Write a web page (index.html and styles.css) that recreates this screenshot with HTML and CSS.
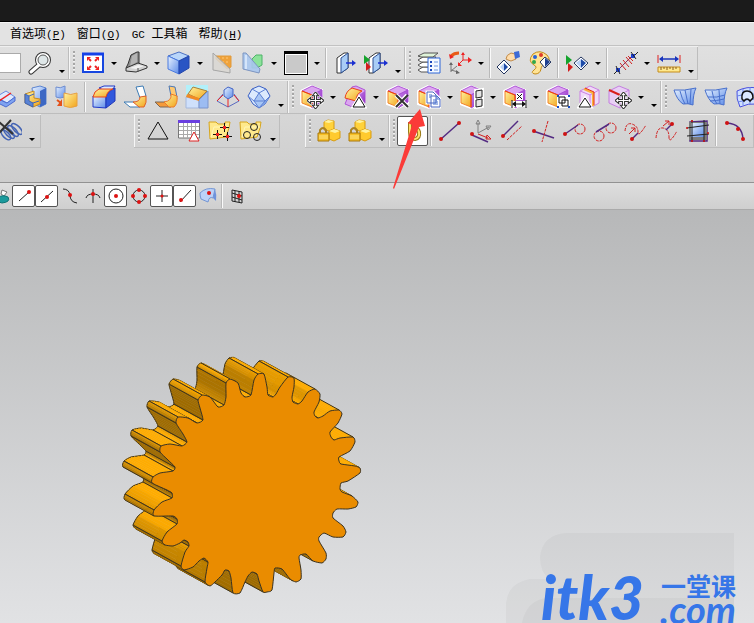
FILE: index.html
```html
<!DOCTYPE html>
<html lang="zh-CN">
  <head>
    <meta charset="utf-8">
    <meta name="viewport" content="width=device-width, initial-scale=1">
    <title>GC 工具箱</title>
    <link rel="stylesheet" href="styles.css">
  </head>
  <body>

  <!-- shared icon parts -->
  <svg class="defs" aria-hidden="true">
    <defs>
      <linearGradient id="blue" x1="0" y1="0" x2="1" y2="1"><stop offset="0" stop-color="#eaf4ff"/><stop offset="1" stop-color="#5b8ae8"/></linearGradient>
      <linearGradient id="gold" x1="0" y1="0" x2="1" y2="1"><stop offset="0" stop-color="#fff3a0"/><stop offset="1" stop-color="#f2a41c"/></linearGradient>
      <linearGradient id="side" x1="0" y1="0" x2="1" y2="1"><stop offset="0" stop-color="#c98be8"/><stop offset="1" stop-color="#8d24c4"/></linearGradient>
      <symbol id="cube" viewBox="0 0 24 24">
        <path d="M1 6 11 1l11 4v13l-10 5L1 19z" fill="#fff" stroke="#fff" stroke-width="2"/>
        <path d="M2 6 12 1l10 4-10 5z" fill="#dba6ef" stroke="#b055d8"/>
        <path d="M12 10 22 5v12l-10 6z" fill="url(#side)" stroke="#a84fd6"/>
        <path d="M2 6l10 4v12L2 18z" fill="url(#gold)" stroke="#f2822a"/>
        <path d="M2 6l10 4v12" fill="none" stroke="#ee3a10"/>
      </symbol>
      <symbol id="move" viewBox="0 0 16 16">
        <path d="M8 0l3 3.500H9V7h3.500V5L16 8l-3.500 3V9H9v3.500h2L8 16l-3-3.500h2V9H3.500v2L0 8l3.500-3v2H7V3.500H5z" fill="#fff" stroke="#fff" stroke-width="2"/>
        <path d="M8 1v14M1 8h14" stroke="#333" stroke-width="3"/>
        <path d="M8 0l3 3.500H5zM8 16l3-3.500H5zM0 8l3.500-3v6zM16 8l-3.500-3v6z" fill="#fff" stroke="#333"/>
        <path d="M8 3v10M3 8h10" stroke="#fff"/>
      </symbol>
      <symbol id="folder" viewBox="0 0 24 24">
        <path d="M1 3h7l2 2h7V3h5l-1 6-3 9-16 2z" fill="#ffe98c" stroke="#d6a51c"/>
        <path d="M3 18 6 8h15" fill="none" stroke="#fff7b8"/>
      </symbol>
      <symbol id="boxes" viewBox="0 0 24 24">
        <path d="M7 3l4-2 6 1v8l-5 2-5-1z" fill="#ffd23c" stroke="#d79b10"/>
        <path d="M7 3l5 1 5-2-6-1z" fill="#fff3a0"/>
        <path d="M12 12l5-2 6 2v7l-6 3-5-2z" fill="#ffca2e" stroke="#d79b10"/>
        <path d="M12 12l5-2 6 2-5 2z" fill="#fff3a0"/>
        <path d="M3 14v-3q3-4 6 0v3" fill="none" stroke="#a98224" stroke-width="2"/>
        <path d="M1 14h11v8H1z" fill="#f7c026" stroke="#a9780c"/>
        <path d="M2 17h9M2 19h9" stroke="#ffe98c"/>
      </symbol>
      <symbol id="door" viewBox="0 0 24 24">
        <path d="M4 7l7-5h4v15l-7 5H4z" fill="#fff" stroke="#333"/>
        <path d="M8 7l7-5v15l-7 5z" fill="#a9cdf6" stroke="#2c4f92"/>
        <path d="M13 12h7" stroke="#1a2fd0" stroke-width="1.500"/><path d="M19 9l4 3-4 3z" fill="#1a2fd0"/>
      </symbol>
    </defs>
  </svg>

  <header class="titlebar"></header>

  <nav class="menubar">
    <a href="#">首选项<span class="key">(<u>P</u>)</span></a>
    <a href="#">窗口<span class="key">(<u>O</u>)</span></a>
    <a href="#"><span class="key">GC </span>工具箱</a>
    <a href="#">帮助<span class="key">(<u>H</u>)</span></a>
  </nav>

  <div class="toolbars">

    <!-- view toolbar -->
    <div class="row">
      <div class="group">
        <input class="find" type="text" aria-label="查找命令">
        <button class="tool" aria-label="查找"><svg viewBox="0 0 24 24"><path d="M11 14 3 21" stroke="#333" stroke-width="5" stroke-linecap="round"/><circle cx="15" cy="9" r="6" fill="none" stroke="#333" stroke-width="4"/><path d="M11 14 3 21" stroke="#fff" stroke-width="3" stroke-linecap="round"/><circle cx="15" cy="9" r="6" fill="#dfe7e8" stroke="#fff" stroke-width="2"/><circle cx="15" cy="9" r="5" fill="none" stroke="#555"/></svg></button>
        <button class="more" aria-label="更多"></button>
      </div>
      <div class="group">
        <i class="grip"></i>
        <button class="tool" aria-label="适合窗口"><svg viewBox="0 0 24 24"><path d="M2 3h20v18H2z" fill="#fff" stroke="#1747e0" stroke-width="2"/><path d="M1 3h22" stroke="#1440e8" stroke-width="3"/><path d="M8 8l2 2M16 8l-2 2M8 17l2-2M16 17l-2-2" stroke="#e22" stroke-width="2"/><path d="M6 6h4L6 10zM18 6h-4l4 4zM6 19v-4l4 4zM18 19v-4l-4 4z" fill="#e22"/></svg></button>
        <button class="caret" aria-label="展开"></button>
        <button class="tool" aria-label="定向"><svg viewBox="0 0 24 24"><path d="M4 13 7 4l6-3h2v11L6 17H2z" fill="#8f8f8f" stroke="#333"/><path d="M8 5l5-3v9l-7 4z" fill="#b5b5b5"/><path d="M2 17l12-5 9 3v2l-11 4-10-1z" fill="#d2d2d2" stroke="#333"/><path d="M6 17l8-3 6 1-8 3z" fill="#f2f2f2"/><path d="M14 17v4" stroke="#555"/></svg></button>
        <button class="caret" aria-label="展开"></button>
        <button class="tool" aria-label="着色"><svg viewBox="0 0 24 24"><path d="M1 5 12 1l10 4-10 5z" fill="#b9d6fa" stroke="#4a70c4"/><path d="M1 5l11 5v13L1 18z" fill="url(#blue)" stroke="#4a7ae0"/><path d="M12 10l10-5v12l-10 6z" fill="#2a55c4" stroke="#2447ac"/></svg></button>
        <button class="caret" aria-label="展开"></button>
        <button class="tool" aria-label="剖切"><svg viewBox="0 0 24 24"><path d="M6 5h15v11l-4 2L6 8z" fill="#efa23a" stroke="#e09a3c"/><path d="M8 7h12M12 11h8" stroke="#ffc878" stroke-dasharray="2 2"/><path d="M3 2l17 16v4L3 19z" fill="#d9d7d2" fill-opacity=".85" stroke="#a5a5a5"/></svg></button>
        <button class="tool" aria-label="编辑截面"><svg viewBox="0 0 24 24"><path d="M11 8l4-4h6v10l-5 3h-5z" fill="#8ce29a" stroke="#4db368"/><path d="M2 2h3l14 16-1 4-16-4z" fill="#a9c6ee" fill-opacity=".9" stroke="#7d95c0"/><path d="M5 4v14" stroke="#d5e5fa" stroke-width="2"/></svg></button>
        <button class="caret" aria-label="展开"></button>
        <button class="tool" aria-label="背景色"><span class="swatch"></span></button>
        <button class="caret" aria-label="展开"></button>
        <i class="sep"></i>
        <button class="tool" aria-label="导出"><svg viewBox="0 0 24 24"><use href="#door"/></svg></button>
        <button class="tool" aria-label="运行导出"><svg viewBox="0 0 24 24"><use href="#door" x="1"/><path d="M0 4l6 5-6 4z" fill="#15a32c"/><path d="M2 11l5 5-5 4z" fill="#d31c1c"/></svg></button>
        <button class="more" aria-label="更多"></button>
      </div>
      <div class="group">
        <i class="grip"></i>
        <button class="tool" aria-label="图层设置"><svg viewBox="0 0 24 24"><g fill="#fff" stroke="#555"><path d="M1 19l5-3h13l-4 5H4z"/><path d="M1 14l5-3h13l-4 5H4z"/><path d="M1 9l5-3h13l-4 5H4z"/><path d="M1 5l6-3h14l-5 4H4z" fill="#dff3d8"/></g><path d="M11 7h12v15H11z" fill="#f4f9ff" stroke="#2f66d8"/><path d="M13 11h2M13 15h2M13 19h2" stroke="#1d49bb" stroke-width="2"/><path d="M17 11h4M17 15h4M17 19h4" stroke="#6b94df"/></svg></button>
        <button class="tool" aria-label="坐标系"><svg viewBox="0 0 24 24"><path d="M3 12v9M3 20l6-5M3 19l7 2" fill="none" stroke="#777"/><path d="M1 14l2-3 2 3zM8 19l4 3-4 1z" fill="#666"/><path d="M15 2v7h7M15 9l-4 4" fill="none" stroke="#e22"/><path d="M13 4l2-3 2 3zM20 6l4 3-4 3zM10 11v4h4z" fill="#e22"/><path d="M3 5q3-3 8-3" fill="none" stroke="#e85b18" stroke-width="3"/><path d="M1 3l1 5 4-2z" fill="#e22"/></svg></button>
        <button class="caret" aria-label="展开"></button>
        <i class="sep"></i>
        <button class="tool" aria-label="显示隐藏"><svg viewBox="0 0 24 24"><path d="M7 9l7 7-7 7-7-7z" fill="#fff" stroke="#22345e"/><path d="M7 12v8l4-4z" fill="#1d4ba8"/><path d="M7 12v8l-4-4z" fill="#bcd2f4"/><path d="M9 8q0-4 5-6l4 1 1 5-5 2-3-1z" fill="#ffdcaa" stroke="#c08a4a"/><path d="M17 1l5-1 1 6-5 2z" fill="#3c6ad6"/></svg></button>
        <button class="tool" aria-label="对象显示"><svg viewBox="0 0 24 24"><path d="M5 3q7-5 14 1 5 6-1 9-5 1-5 5-1 5-6 5-5-1-1-4 4-3 0-5-7-4-1-11z" fill="#ffe394" stroke="#c48b1a"/><circle cx="7" cy="6" r="2" fill="#2863d8"/><circle cx="13" cy="4" r="2" fill="#de3b2a"/><circle cx="6" cy="11" r="2" fill="#2fa84a"/><path d="M17 6l6 5-6 6-5-6z" fill="#fff" stroke="#22345e"/><path d="M17 7v9l5-5z" fill="#1d3f90"/></svg></button>
        <i class="sep"></i>
        <button class="tool" aria-label="显示"><svg viewBox="0 0 24 24"><path d="M1 4l6 5-6 5z" fill="#15a32c"/><path d="M3 12l5 4-5 5z" fill="#d31c1c"/><path d="M16 6l7 6-7 7-7-7z" fill="#fff" stroke="#22345e"/><path d="M16 8v9l5-5z" fill="#1d4ba8"/><path d="M16 8v9l-5-5z" fill="#b5cdf3"/></svg></button>
        <button class="caret" aria-label="展开"></button>
        <i class="sep"></i>
        <button class="tool" aria-label="测量距离"><svg viewBox="0 0 24 24"><path d="M4 19 19 4" stroke="#8a3060"/><path d="M6 12l6 7M9 9l6 7M12 6l6 7M14 5l5 5" stroke="#d02020"/><path d="M2 17h4v4H2zM17 3h4v4h-4z" fill="#1d3fd0"/><path d="M2 15l4 8M0 23l3-3M17 1l5 7M21 4l3-3" stroke="#222"/></svg></button>
        <button class="caret" aria-label="展开"></button>
        <button class="tool" aria-label="测量"><svg viewBox="0 0 24 24"><path d="M1 4v8M23 4v8" stroke="#d22"/><path d="M3 8h18" stroke="#1a35bd" stroke-width="1.500"/><path d="M2 8l4-3v6zM22 8l-4-3v6z" fill="#1a35bd"/><path d="M1 16h22v5H1z" fill="#ffe98c" stroke="#c48b1a"/><path d="M4 16v3M7 16v2M10 16v3M13 16v2M16 16v3M19 16v2" stroke="#875a20"/></svg></button>
        <button class="more" aria-label="更多"></button>
      </div>
    </div>

    <!-- feature toolbar -->
    <div class="row">
      <div class="group">
        <button class="tool cut" aria-label="分割"><svg viewBox="0 0 24 24"><path d="M3 12l10-6 9 6-8 6z" fill="#dfeafd" stroke="#6a8ae0"/><path d="M3 13v4l10 5 9-6v-4l-8 6z" fill="#7fa3f0" stroke="#4b6bd0"/><path d="M6 16 18 8" stroke="#e22" stroke-width="1.500"/></svg></button>
        <button class="tool" aria-label="修剪体"><svg viewBox="0 0 24 24"><path d="M8 3l8-2 6 2v16l-6 3-6-3z" fill="url(#blue)" stroke="#5c84d0"/><path d="M16 6l6-3v16l-6 3z" fill="#3d68c4"/><path d="M1 9l9-3v7l6 1v5l-7 3-8-4z" fill="url(#gold)" stroke="#c58a22"/><path d="M1 9l4 2v5l4 2v4l-8-4zM5 11l5-2M9 18l6-2" fill="#5a83d4" stroke="#3c64ba"/></svg></button>
        <button class="tool" aria-label="片体"><svg viewBox="0 0 24 24"><path d="M1 2q4 2 9-1v11q-5 2-9 0z" fill="url(#blue)" stroke="#6c8cd0"/><path d="M9 8q7 3 13 0v13q-7 3-13 0z" fill="url(#gold)" stroke="#e8a040"/><path d="M2 15l4 3" stroke="#e4521b" stroke-width="2"/><path d="M7 14v7H2z" fill="#e4521b"/></svg></button>
        <i class="sep"></i>
        <button class="tool" aria-label="边倒圆"><svg viewBox="0 0 24 24"><path d="M7 3l5-2h11l-2 3-6 3z" fill="#dceaff" stroke="#2038c8"/><path d="M1 11h13v12l-13-1z" fill="url(#blue)" stroke="#2038c8"/><path d="M14 12q2-6 9-9v13l-9 7z" fill="#3158dc" stroke="#2038b8"/><path d="M1 12q1-6 6-8h14q-6 2-7 8z" fill="url(#gold)" stroke="#e8421c"/></svg></button>
        <button class="tool" aria-label="面倒圆"><svg viewBox="0 0 24 24"><path d="M13 2l7-1 3 10-6 2z" fill="#fff" stroke="#3d7bb4"/><path d="M1 17h10l6 5H7z" fill="#fff" stroke="#3d7bb4"/><path d="M17 12l6-1q1 7-2 11h-5l-6-5q7 0 7-5z" fill="url(#gold)" stroke="#e0602a"/></svg></button>
        <button class="tool" aria-label="软倒圆"><svg viewBox="0 0 24 24"><path d="M15 1l6 1 2 10-6-1z" fill="#ffc870" stroke="#4a78b8"/><path d="M1 17h10l6 5H6z" fill="#f59a3a" stroke="#7a6858"/><path d="M17 9l6 2q1 7-3 11h-5l-5-5q8-1 7-8z" fill="url(#gold)" stroke="#ec7a28"/></svg></button>
        <button class="tool" aria-label="倒斜角"><svg viewBox="0 0 24 24"><path d="M1 0h22v23H1z" fill="#b2f0fa"/><path d="M1 12l13 3v8H1z" fill="#cfe0fb" stroke="#a5b8dc"/><path d="M14 15l9-9v17h-9z" fill="#9cbcf2" stroke="#7a94cc"/><path d="M3 9l5-7 14 4-8 8z" fill="url(#gold)" stroke="#a8803c"/><path d="M2 9l12 4v3L1 12z" fill="#f28a24"/></svg></button>
        <button class="tool" aria-label="拔模"><svg viewBox="0 0 24 24"><path d="M8 5l4-3 5 2v7l-5 3-4-3z" fill="url(#blue)" stroke="#4464c4"/><path d="M7 9 1 16l11 6 11-6-5-7" fill="none" stroke="#5a6ac0"/><path d="M7 10 1 16M12 14v8M18 10l5 6" stroke="#e22"/></svg></button>
        <button class="tool" aria-label="体"><svg viewBox="0 0 24 24"><path d="M12 1l7 3 4 7-5 8-6 4-6-4-5-8 4-7z" fill="#dceafd" stroke="#3b60c4"/><path d="M12 8l6 8-6 7-5-7z" fill="#a8c6f4"/><path d="M18 16l5-5-5 8-6 4z" fill="#7fa4e8"/><path d="M5 4l7 4 7-4M12 8l-5 8-6-5M12 8l6 8 5-5M7 16h11M7 16l5 7 6-7" fill="none" stroke="#5c80d4"/></svg></button>
        <button class="more" aria-label="更多"></button>
      </div>
      <div class="group">
        <i class="grip"></i>
        <button class="tool" aria-label="移动面"><svg viewBox="0 0 24 24"><use href="#cube"/><use href="#move" x="7" y="7" width="17" height="17"/></svg></button>
        <button class="caret" aria-label="展开"></button>
        <button class="tool" aria-label="调整面"><svg viewBox="0 0 24 24"><path d="M9 2l4-1 9 4v13l-10 5-10-4z" fill="#dba6ef" stroke="#b055d8"/><path d="M13 12l9-6v11l-9 6z" fill="url(#side)"/><path d="M2 13q1-7 7-10l10 3q-6 3-6 10z" fill="url(#gold)" stroke="#e8421c"/><path d="M16 12l6 10H10z" fill="#fff" stroke="#fff" stroke-width="3"/><path d="M16 12l6 10H10z" fill="#fff" stroke="#111"/></svg></button>
        <button class="caret" aria-label="展开"></button>
        <button class="tool" aria-label="删除面"><svg viewBox="0 0 24 24"><use href="#cube"/><path d="M10 10l12 12M21 10 10 22" stroke="#fff" stroke-width="4"/><path d="M10 10l12 12M22 10 10 22" stroke="#333" stroke-width="2"/></svg></button>
        <button class="tool" aria-label="复制面"><svg viewBox="0 0 24 24"><use href="#cube"/><path d="M10 7h6l3 3v8h-9zM14 11h6l3 3v8h-9z" fill="#fff" stroke="#fff" stroke-width="3"/><path d="M10 7h6l3 3v8h-9zM14 11h6l3 3v8h-9z" fill="#fff" stroke="#4a66c0"/><path d="M12 10h3M12 12h2M16 15h4M16 17h5M16 19h5M20 11v3h3" fill="none" stroke="#4a74d0"/></svg></button>
        <button class="caret" aria-label="展开"></button>
        <button class="tool" aria-label="阵列面"><svg viewBox="0 0 24 24"><use href="#cube" x="-1"/><path d="M16 6l6-1v7l-6 1zM16 15l6-1v7l-6 1z" fill="#fff" stroke="#fff" stroke-width="4"/><path d="M16 6l6-1v7l-6 1zM16 15l6-1v7l-6 1z" fill="#e6e6e6" stroke="#222"/></svg></button>
        <button class="caret" aria-label="展开"></button>
        <button class="tool" aria-label="线性尺寸"><svg viewBox="0 0 24 24"><use href="#cube"/><path d="M8 16h16v6H8zM13 8h7v7h-7z" fill="#fff"/><path d="M9 15v8M23 15v8M10 19h12M14 9l5 5M19 9l-5 5" stroke="#111"/><path d="M9 19l4-3v6zM23 19l-4-3v6z" fill="#111"/></svg></button>
        <button class="caret" aria-label="展开"></button>
        <button class="tool" aria-label="组合面"><svg viewBox="0 0 24 24"><use href="#cube"/><path d="M11 10h13v13H11z" fill="#fff"/><path d="M13 12h6v6h-6zM16 15h6v6h-6z" fill="none" stroke="#111"/><path d="M11 10h2v2h-2zM22 10h2v2h-2zM11 21h2v2h-2zM22 21h2v2h-2z" fill="#124bc4"/></svg></button>
        <button class="tool" aria-label="壳单元"><svg viewBox="0 0 24 24"><path d="M3 6l10-5 9 4v13l-9 5-10-5z" fill="#efd9f8" stroke="#cb80e4"/><path d="M3 6l10 4 9-5M13 10v13" fill="none" stroke="#cb80e4"/><path d="M7 4l9 4v13" fill="none" stroke="#f9b23c" stroke-width="2"/><path d="M8 3l9 4v13" fill="none" stroke="#e82c10"/><path d="M8 13l6 9H2z" fill="#fff" stroke="#fff" stroke-width="3"/><path d="M8 13l6 9H2z" fill="#fff" stroke="#111"/></svg></button>
        <button class="tool" aria-label="移动边"><svg viewBox="0 0 24 24"><path d="M1 6 11 1l10 4v13l-9 5-11-5z" fill="#e8cff5" stroke="#c47ee0"/><path d="M12 10l9-5M12 10v13" stroke="#c47ee0"/><path d="M1 5l11 5" stroke="#d8201c" stroke-width="2"/><use href="#move" x="7" y="7" width="17" height="17"/></svg></button>
        <button class="caret" aria-label="展开"></button>
        <button class="more" aria-label="更多"></button>
      </div>
      <div class="group">
        <i class="grip"></i>
        <button class="tool" aria-label="直纹"><svg viewBox="0 0 24 24"><path d="M1 5q10 1 22-2-3 6-3 17-5-2-10-1-6-4-9-14z" fill="url(#blue)" stroke="#4870cc"/><path d="M7 6q2 8 5 13M12 5l3 14M18 4l-1 15" fill="none" stroke="#4870cc"/></svg></button>
        <button class="tool" aria-label="通过曲线网格"><svg viewBox="0 0 24 24"><path d="M1 5q10 1 22-2-3 6-3 17-5-2-10-1-6-4-9-14z" fill="url(#blue)" stroke="#4870cc"/><path d="M8 6q1 8 5 13M15 5l1 14M4 12q9 1 17-2M6 16q6 0 14-2" fill="none" stroke="#4870cc"/></svg></button>
        <button class="tool" aria-label="曲面"><svg viewBox="0 0 24 24"><path d="M2 6q10-5 20-3v16q-9-1-17 3-4-8-3-16z" fill="#cfe0ff" stroke="#4a50e0"/><path d="M2 11q10-3 20-2M3 17q9-3 19-3M8 4v16M15 2v17" fill="none" stroke="#6a84e8"/><path d="M7 14q-1-8 5-8t6 7l-3 3q-3-4-6 0z" fill="#dceaff" stroke="#111" stroke-width="1.500"/></svg></button>
      </div>
    </div>

    <!-- gear toolbar -->
    <div class="row">
      <div class="group coil">
        <button class="tool" aria-label="弹簧删除"><svg viewBox="0 0 24 24"><g fill="none" stroke="#4464b4" stroke-width="1.500"><ellipse cx="8" cy="16" rx="3" ry="6" transform="rotate(-45 8 16)"/><ellipse cx="11" cy="14" rx="3" ry="7" transform="rotate(-45 11 14)"/><ellipse cx="15" cy="12" rx="3" ry="7" transform="rotate(-45 15 12)"/><ellipse cx="19" cy="10" rx="3" ry="7" transform="rotate(-45 19 10)"/></g><path d="M1 3l14 12M13 1 1 14" stroke="#333" stroke-width="2"/></svg></button>
        <button class="more" aria-label="更多"></button>
      </div>
      <div class="group gc">
        <i class="grip"></i>
        <button class="tool" aria-label="三角"><svg viewBox="0 0 24 24"><path d="M12 3l10 17H2z" fill="none" stroke="#111"/></svg></button>
        <button class="tool" aria-label="表格"><svg viewBox="0 0 24 24"><path d="M1.500 2h21v17h-21z" fill="#fff" stroke="#777"/><path d="M1 1h22v3H1z" fill="#6a3fe0"/><path d="M2 7.500h20M2 11.500h20M2 15.500h20M6.500 4v15M10.500 4v15M14.500 4v15M18.500 4v15" stroke="#aaa"/><path d="M17 13l5 9H12z" fill="#fff" stroke="#d22"/></svg></button>
        <button class="tool" aria-label="点集"><svg viewBox="0 0 24 24"><use href="#folder"/><path d="M9.500 11v9M5 15.500h9M16.500 4v9M12 8.500h9M19.500 13v9M15 17.500h9" stroke="#111"/><path d="M8 14h3v3H8zM15 7h3v3h-3zM18 16h3v3h-3z" fill="#e22"/></svg></button>
        <button class="tool" aria-label="孔集"><svg viewBox="0 0 24 24"><use href="#folder"/><g fill="none" stroke="#222"><circle cx="8" cy="16" r="3.500"/><circle cx="15" cy="8" r="3.500"/><circle cx="18" cy="18" r="3.500"/></g></svg></button>
        <button class="more" aria-label="更多"></button>
      </div>
      <div class="group assembly">
        <i class="grip"></i>
        <button class="tool" aria-label="锁定部件"><svg viewBox="0 0 24 24"><use href="#boxes"/></svg></button>
        <button class="tool" aria-label="解锁部件"><svg viewBox="0 0 24 24"><use href="#boxes"/></svg></button>
        <button class="more" aria-label="更多"></button>
      </div>
      <div class="group last">
        <i class="grip"></i>
        <button class="tool on" aria-label="轮廓"><svg viewBox="0 0 24 24"><path d="M9 3v10q0 7 5 7 5-1 4-7-1-4-5-4" fill="none" stroke="#9a7a18" stroke-width="4"/><path d="M9 3v10q0 7 5 7 5-1 4-7-1-4-5-4" fill="none" stroke="#ffe26b" stroke-width="2"/></svg></button>
        <i class="sep"></i>
        <button class="tool line" aria-label="直线"><svg viewBox="0 0 24 24"><path d="M3 20 21 4"/><circle cx="3" cy="20" r="2"/><circle cx="21" cy="4" r="2"/></svg></button>
        <button class="tool line" aria-label="沿轴直线"><svg viewBox="0 0 24 24"><path class="gray" d="M9 14V4M9 14l11-6M7 5l2-4 2 4zM17 7l5 0-3 4z"/><path d="M3 16l16 7"/><path class="red" d="M9 15l10 4M18 16l4 4h-5z"/><circle cx="3" cy="15" r="2"/></svg></button>
        <button class="tool line" aria-label="平行线"><svg viewBox="0 0 24 24"><path d="M3 17 18 2"/><path class="dash" d="M7 21 22 7"/><circle cx="3" cy="17" r="2"/></svg></button>
        <button class="tool line" aria-label="垂直线"><svg viewBox="0 0 24 24"><path d="M2 12l21 7"/><path class="dash" d="M17 2l-6 21"/><circle cx="3" cy="12" r="2"/></svg></button>
        <button class="tool line" aria-label="点到相切"><svg viewBox="0 0 24 24"><circle class="dash" cx="18" cy="10" r="5"/><path d="M3 15l13-9"/><circle cx="3" cy="15" r="2"/></svg></button>
        <button class="tool line" aria-label="相切直线"><svg viewBox="0 0 24 24"><circle class="dash" cx="18" cy="9" r="5"/><circle class="dash" cx="6" cy="17" r="5"/><path d="M3 13 16 5"/></svg></button>
        <button class="tool line" aria-label="曲线相切"><svg viewBox="0 0 24 24"><path class="dash" d="M1 12Q2 3 8 5t6 8 8-7"/><path d="M8 20l6-6"/><path class="red" d="M5 15l6-6M7 9h4v4"/><circle cx="8" cy="20" r="2"/></svg></button>
        <button class="tool line" aria-label="曲线法向"><svg viewBox="0 0 24 24"><path class="dash" d="M1 19Q2 8 8 9t6 9 8-6"/><path d="M11 11l6-6"/><path class="red" d="M8 7l6-5M10 2h4v4"/><circle cx="17" cy="5" r="2"/></svg></button>
        <button class="tool line" aria-label="缠绕曲线"><svg viewBox="0 0 24 24"><path d="M4 3l17-1v20H4z" fill="#8a8a8a"/><rect x="3" y="3" width="18" height="18" fill="#7c7c7c"/><rect x="5" y="4" width="13" height="14" fill="url(#blue)"/><path class="black" d="M6 1v22M18 1v22M1 9l22-3M1 17l22-2"/><circle cx="6" cy="2" r="1"/><circle cx="1" cy="9" r="1"/><circle cx="22" cy="14" r="1"/><circle cx="6" cy="22" r="1"/><circle cx="18" cy="22" r="1"/></svg></button>
        <i class="sep"></i>
        <button class="tool line" aria-label="圆弧"><svg viewBox="0 0 24 24"><path d="M4 4q15 1 16 16"/><circle cx="4" cy="4" r="2"/><circle cx="15" cy="10" r="2"/><circle cx="20" cy="20" r="2"/></svg></button>
      </div>
    </div>
  </div>

  <!-- snap point bar -->
  <div class="snapbar">
    <button class="snap cut" aria-label="捕捉"><svg viewBox="0 0 20 20"><path class="paper" d="M11 4l5 2-3 4-3-2z"/><path class="teal" d="M7 12q4-4 10-1 3 5-6 6-5-1-4-5z"/></svg></button>
    <button class="snap on" aria-label="端点"><svg viewBox="0 0 20 20"><path d="M5 15 15 6"/><circle cx="15" cy="6" r="2"/></svg></button>
    <button class="snap on" aria-label="中点"><svg viewBox="0 0 20 20"><path d="M4 16 16 5"/><circle cx="10" cy="11" r="2"/></svg></button>
    <button class="snap" aria-label="控制点"><svg viewBox="0 0 20 20"><path d="M3 3q6 0 7 6 0 7 7 8"/><circle cx="10" cy="9" r="2"/></svg></button>
    <button class="snap" aria-label="交点"><svg viewBox="0 0 20 20"><path d="M3 12q1-4 7-4t7 4M10 3v14"/><circle cx="10" cy="8" r="2"/></svg></button>
    <button class="snap on" aria-label="圆心"><svg viewBox="0 0 20 20"><circle class="ring" cx="10" cy="10" r="7"/><circle cx="10" cy="10" r="2"/></svg></button>
    <button class="snap" aria-label="象限点"><svg viewBox="0 0 20 20"><circle class="ring" cx="10" cy="10" r="6"/><circle cx="10" cy="4" r="2"/><circle cx="10" cy="16" r="2"/><circle cx="4" cy="10" r="2"/><circle cx="16" cy="10" r="2"/></svg></button>
    <button class="snap on" aria-label="现有点"><svg viewBox="0 0 20 20"><path d="M10 4v12M4 10h12"/><circle cx="10" cy="10" r="1.500"/></svg></button>
    <button class="snap on" aria-label="曲线上的点"><svg viewBox="0 0 20 20"><path d="M5 16 16 4"/><circle cx="6" cy="14" r="2"/></svg></button>
    <button class="snap" aria-label="面上的点"><svg viewBox="0 0 20 20"><path class="face" d="M2 7q6-6 15-4l-2 9q-4-2-5 4l-7-3q-1-3-1-6z"/><path class="shade" d="M17 3l-2 9 3 3q1-6-1-12z"/><circle cx="11" cy="7" r="2"/></svg></button>
    <i class="sep"></i>
    <button class="snap" aria-label="栅格"><svg viewBox="0 0 20 20"><path d="M5 4l10 2v11L5 15zM5 7l10 3M5 11l10 3M8 5v11M12 5v11"/><circle cx="12" cy="10" r="2"/></svg></button>
  </div>

  <main class="viewport">
    <svg class="gear" id="gear" viewBox="121 355 242 241" role="img" aria-label="齿轮"></svg>

    <div class="watermark">
      <svg class="cloud" viewBox="0 0 230 90" aria-hidden="true">
        <path d="M60 0h168v90H0V70q2-20 24-24h20q-10-6-10-22Q36 2 60 0z"/>
        <path d="M40 65h188v25H16q4-22 24-25z"/>
      </svg>
      <span class="brand">itk3</span>
      <span class="domain"><b>一堂课</b><em>.com</em></span>
    </div>
  </main>

  <svg class="pointer" viewBox="0 0 34 84" aria-hidden="true"><path d="M28 1l5 17-6 1L2 81 1 80 20 17l-4-2z" fill="#fb3b38"/></svg>

  <script src="gear.js"></script>
  </body>
</html>
```

FILE: styles.css
```css
* {
  box-sizing: border-box;
}

body {
  margin: 0;
  min-height: 100vh;
  display: flex;
  flex-direction: column;
  position: relative;
  overflow: hidden;
  background: #d4d4d4;
  font-family: "Noto Sans CJK SC", "Liberation Sans", sans-serif;
  font-size: 12px;
  color: #000;
}

button {
  margin: 0;
  padding: 0;
  border: 0;
  background: none;
}

.defs {
  position: absolute;
  width: 0;
  height: 0;
}

.titlebar {
  height: 22px;
  background: #1b1b1b;
  border-bottom: 1px solid #000;
}

/* menu */
.menubar {
  display: flex;
  gap: 11px;
  height: 24px;
  padding-left: 10px;
  align-items: center;
  background: #e3e3e3;
  border-top: 1px solid #f4f4f4;
  border-bottom: 1px solid #c2c2c2;
}

.menubar a {
  color: #000;
  text-decoration: none;
  line-height: 20px;
  white-space: pre;
}

.key {
  font-family: "Liberation Mono", monospace;
  font-size: 11px;
}

/* toolbars */
.toolbars {
  padding-bottom: 34px;
  background: linear-gradient(#e0e0e0, #cdcdcd);
}

.row {
  display: flex;
  height: 34px;
  overflow: hidden;
}

.group {
  display: flex;
  flex: none;
  align-items: center;
  height: 34px;
  border-top: 1px solid #efefef;
  border-bottom: 1px solid #bdbdbd;
  box-shadow: inset -1px 0 #bdbdbd;
}

.group + .group {
  box-shadow: inset 1px 0 #f6f6f6, inset -1px 0 #bdbdbd;
}

.coil {
  margin-left: -6px;
  width: 47px;
}

.gc {
  margin-left: 93px;
}

.assembly {
  margin-left: 25px;
}

.last {
  flex: 1 0 auto;
}

.find {
  width: 21px;
  height: 20px;
  margin-right: 3px;
  border: 1px solid #aaa;
  border-left: 0;
  background: #fff;
}

.tool {
  display: flex;
  flex: none;
  align-items: center;
  justify-content: center;
  width: 31px;
  height: 30px;
}

.tool svg {
  flex: none;
  width: 24px;
  height: 24px;
}

.tool.cut {
  margin-left: -11px;
}

.tool.on {
  border: 1px solid #555;
  border-radius: 2px;
  background: #fff;
}

.swatch {
  width: 24px;
  height: 24px;
  border: 1px solid #000;
  border-top-width: 3px;
  background: #c9c9c9;
  box-shadow: inset 0 0 0 1px #fff;
}

.caret,
.more {
  display: flex;
  flex: none;
  align-items: center;
  justify-content: center;
  width: 12px;
  height: 30px;
}

.more {
  width: 14px;
  padding-top: 16px;
}

.caret::before,
.more::before {
  content: "";
  border: 3px solid transparent;
  border-top-color: #000;
  border-bottom: 0;
}

.grip {
  flex: none;
  width: 8px;
  height: 24px;
  background: repeating-linear-gradient(#a6a6a6 0 2px, #f2f2f2 2px 3px, transparent 3px 4px) 4px 0 / 2px 24px no-repeat;
}

.sep {
  flex: none;
  width: 6px;
  height: 30px;
  background: linear-gradient(90deg, #b9b9b9 50%, #fafafa 50%) 2px 0 / 2px 30px no-repeat;
}

/* curve icons */
.line path,
.line .dash {
  fill: none;
  stroke: #532a82;
  stroke-width: 1.5;
}

.line circle {
  fill: #cf1313;
}

.line .dash {
  fill: none;
  stroke: #d22020;
  stroke-width: 1;
  stroke-dasharray: 3 1;
}

.line .red {
  stroke: #d22020;
  stroke-width: 1;
}

.line .gray {
  stroke: #808080;
  stroke-width: 1;
}

.line .black {
  stroke: #222;
  stroke-width: 1;
}

/* snap bar */
.snapbar {
  display: flex;
  align-items: center;
  height: 28px;
  background: linear-gradient(#dedede, #cfcfcf);
  border-top: 1px solid #929292;
  border-bottom: 1px solid #aaa;
}

.snapbar .sep {
  height: 24px;
}

.snap {
  display: flex;
  flex: none;
  align-items: center;
  justify-content: center;
  width: 23px;
  height: 22px;
}

.snap.cut {
  margin-left: -11px;
}

.snap.on {
  border: 1px solid #555;
  border-radius: 2px;
  background: #fff;
}

.snap svg {
  flex: none;
  width: 20px;
  height: 20px;
}

.snap path {
  fill: none;
  stroke: #222;
}

.snap circle {
  fill: #dd1212;
}

.snap .ring {
  fill: none;
  stroke: #222;
}

.snap .face {
  fill: #bcd2f8;
  stroke: #7496d4;
}

.snap .shade {
  fill: #6f93dc;
  stroke: none;
}

.snap .paper {
  fill: #fff;
  stroke: #777;
}

.snap .teal {
  fill: #1b9a9c;
  stroke: #0f7476;
}

/* graphics window */
.viewport {
  flex: 1;
  position: relative;
  overflow: hidden;
  background: linear-gradient(#b7b8b9, #e1e2e4);
}

.gear {
  position: absolute;
  left: 121px;
  top: 145px;
  width: 242px;
  height: 241px;
}

.watermark {
  position: absolute;
  right: 18px;
  bottom: 0;
  width: 230px;
  height: 90px;
  color: #3676e8;
}

.cloud {
  position: absolute;
  left: 0;
  top: 0;
  width: 230px;
  height: 90px;
  fill: #000;
  fill-opacity: 0.03;
}

.brand {
  position: absolute;
  left: 35px;
  bottom: 0;
  font: italic 900 60px/52px Lato, sans-serif;
}

.domain {
  position: absolute;
  right: 0;
  bottom: 0;
  display: flex;
  flex-direction: column;
  align-items: flex-end;
}

.domain b {
  font-size: 25px;
  line-height: 20px;
  font-weight: 700;
}

.domain em {
  font: italic bold 38px/28px Lato, sans-serif;
}

.pointer {
  position: absolute;
  left: 392px;
  top: 108px;
  width: 34px;
  height: 84px;
  pointer-events: none;
}
```

FILE: gear.js
```js
// front face outline, one line per tooth, clockwise from the top
const teeth = [
  [[251,395],[254,380],[258,374],[264,374],[267,387],[268,395],[273,397],[276,394]],
  [[280,387],[288,377],[294,378],[294,387],[292,397],[293,402],[298,404],[302,401]],
  [[308,392],[315,389],[320,394],[319,402],[314,412],[315,416],[318,418],[323,416]],
  [[330,411],[339,410],[342,414],[338,423],[330,432],[331,437],[334,440],[340,438]],
  [[353,437],[355,442],[350,451],[339,457],[339,461],[341,464]],
  [[355,466],[360,468],[360,473],[348,481],[341,483],[340,489],[342,492]],
  [[352,496],[358,502],[356,507],[348,509],[337,509],[333,513],[333,518]],
  [[343,526],[346,532],[343,537],[333,537],[324,533],[319,537],[319,541]],
  [[326,553],[326,559],[322,563],[313,561],[306,554],[300,555],[299,558]],
  [[301,570],[301,579],[296,582],[290,579],[282,569],[275,568],[274,573]],
  [[272,590],[267,592],[263,592],[259,581],[257,574],[252,572],[248,576]],
  [[245,582],[240,593],[233,593],[231,578],[229,571],[225,570],[222,575]],
  [[215,582],[210,586],[205,582],[207,568],[208,562],[204,558],[199,561]],
  [[193,567],[184,570],[181,566],[185,552],[189,546],[188,542],[184,540],[180,543]],
  [[173,546],[165,545],[162,541],[167,532],[177,524],[177,519],[173,516]],
  [[154,516],[154,510],[162,502],[172,498],[172,493],[167,490]],
  [[152,483],[153,477],[160,473],[173,471],[175,467],[168,460]],
  [[160,452],[161,446],[170,444],[182,446],[187,442],[183,434]],
  [[176,423],[178,417],[188,418],[197,423],[203,420],[200,408]],
  [[198,400],[202,395],[210,397],[218,407],[224,405],[226,397]],
  [[226,383],[230,379],[238,383],[241,393],[245,397]]
];
const depth = [-29, -16];
const light = [0.3, -0.95];
const ink = "#3a3220";
const svg = document.getElementById("gear");

function add(name, attrs) {
  const el = document.createElementNS("http://www.w3.org/2000/svg", name);
  for (const key in attrs) el.setAttribute(key, attrs[key]);
  svg.appendChild(el);
}

// soften the outline but keep the tooth corners
const raw = teeth.flat();
const soft = 0.55;
const pts = [];
raw.forEach((p1, i) => {
  const n = raw.length;
  const p0 = raw[(i + n - 1) % n], p2 = raw[(i + 1) % n], p3 = raw[(i + 2) % n];
  for (let t = 0; t < 1; t += 0.25) {
    pts.push([0, 1].map(k => {
      const curve = 0.5 * (2 * p1[k] + (p2[k] - p0[k]) * t +
        (2 * p0[k] - 5 * p1[k] + 4 * p2[k] - p3[k]) * t * t +
        (3 * p1[k] - p0[k] - 3 * p2[k] + p3[k]) * t * t * t);
      return soft * curve + (1 - soft) * (p1[k] + (p2[k] - p1[k]) * t);
    }));
  }
});

function isEdge(i) {
  const n = raw.length;
  const p = raw[(i + n - 1) % n], q = raw[i], r = raw[(i + 1) % n];
  const turn = Math.atan2(r[1] - q[1], r[0] - q[0]) - Math.atan2(q[1] - p[1], q[0] - p[0]);
  return Math.cos(turn) < 0.75;
}

// side walls, nearest drawn last
const walls = pts.map((a, i) => {
  const b = pts[(i + 1) % pts.length];
  const len = Math.hypot(b[0] - a[0], b[1] - a[1]) || 1;
  const normal = [(b[1] - a[1]) / len, (a[0] - b[0]) / len];
  return {
    a, b, normal,
    seen: normal[0] * depth[0] + normal[1] * depth[1] > 0,
    order: (a[0] + b[0]) * depth[0] + (a[1] + b[1]) * depth[1]
  };
});
walls.forEach((w, i) => {
  const prev = walls[(i + walls.length - 1) % walls.length];
  const next = walls[(i + 1) % walls.length];
  w.startLine = !prev.seen || (i % 4 === 0 && isEdge(i / 4));
  w.endLine = !next.seen || ((i + 1) % 4 === 0 && isEdge(((i + 1) / 4) % raw.length));
});

walls.filter(w => w.seen).sort((p, q) => p.order - q.order).forEach(w => {
  const [a, b] = [w.a, w.b];
  const c = [b[0] + depth[0], b[1] + depth[1]];
  const d = [a[0] + depth[0], a[1] + depth[1]];
  const lit = w.normal[0] * light[0] + w.normal[1] * light[1];
  const s = Math.min(1, Math.max(0.62, 0.78 + 0.35 * lit));
  const fill = `rgb(${Math.round(255 * s)},${Math.round(172 * s)},0)`;
  add("path", { d: `M${a}L${b}L${c}L${d}Z`, fill, stroke: fill, "stroke-width": 0.5 });
  add("path", { d: `M${c}L${d}`, stroke: ink });
  if (w.startLine) add("path", { d: `M${a}L${d}`, stroke: ink });
  if (w.endLine) add("path", { d: `M${b}L${c}`, stroke: ink });
});

add("path", { d: "M" + pts.join("L") + "Z", fill: "#ea8c00", stroke: ink });
```
